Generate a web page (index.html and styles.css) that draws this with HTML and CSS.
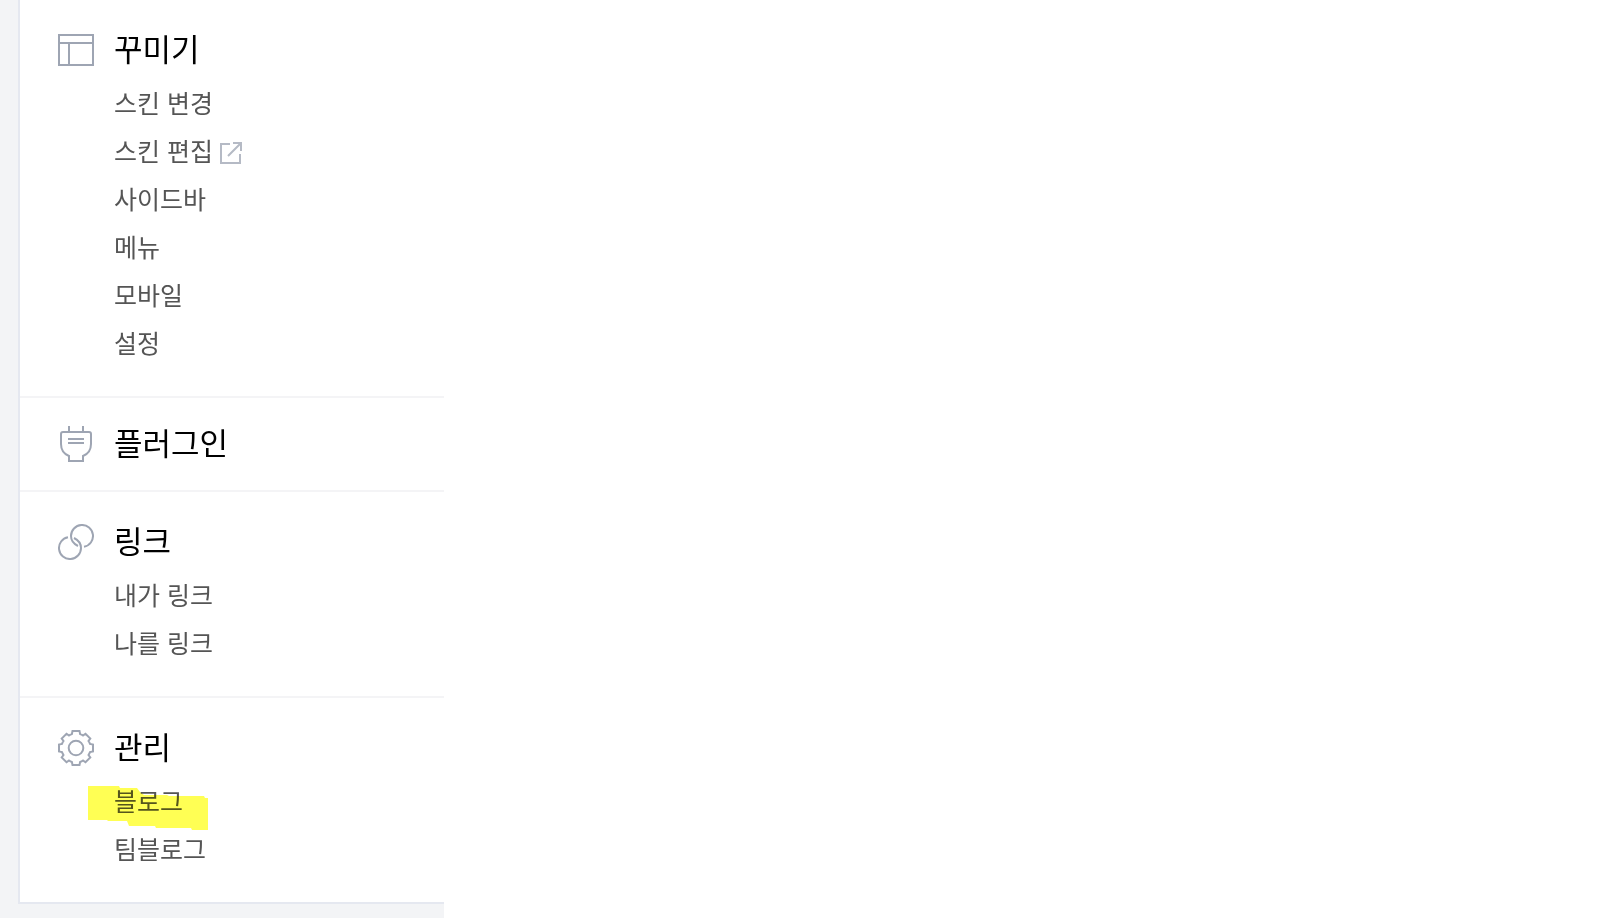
FILE: index.html
```html
<!DOCTYPE html>
<html lang="ko">

<head>
    <meta charset="UTF-8">
    <meta name="viewport" content="width=device-width, initial-scale=1.0">
    <title>블로그 관리</title>
    <link rel="stylesheet" href="styles.css">
</head>

<body>
    <aside class="sidebar">
        <nav class="menu">
            <section class="group">
                <h2 class="title">
                    <svg class="icon" viewBox="0 0 36 36">
                        <path d="M1 3h34v30H1zM1 11h34M11 11v22" />
                    </svg>
                    꾸미기
                </h2>
                <ul class="list">
                    <li><a href="#">스킨 변경</a></li>
                    <li>
                        <a href="#">스킨 편집
                            <svg class="external" viewBox="0 0 24 24">
                                <path d="M11 3H2v19h19v-9M9 15L21 3M14 2h8v8" />
                            </svg>
                        </a>
                    </li>
                    <li><a href="#">사이드바</a></li>
                    <li><a href="#">메뉴</a></li>
                    <li><a href="#">모바일</a></li>
                    <li><a href="#">설정</a></li>
                </ul>
            </section>

            <section class="group single">
                <h2 class="title">
                    <svg class="icon" viewBox="0 0 36 36">
                        <path d="M11 0v6M25 0v6M5 6h26q2 0 2 2v10c0 6-3 10-8 12v5H11v-5c-5-2-8-6-8-12V8q0-2 2-2zM10 13h16M10 17h16" />
                    </svg>
                    플러그인
                </h2>
            </section>

            <section class="group">
                <h2 class="title">
                    <svg class="icon" viewBox="0 0 36 36">
                        <path d="M26 22.800A11 11 0 1 0 13 12C13 16 16 20 20 22" />
                        <path d="M10 13.200A11 11 0 1 0 23 24C23 20 20 16 16 14" />
                    </svg>
                    링크
                </h2>
                <ul class="list">
                    <li><a href="#">내가 링크</a></li>
                    <li><a href="#">나를 링크</a></li>
                </ul>
            </section>

            <section class="group">
                <h2 class="title">
                    <svg class="icon" viewBox="-18 -18 36 36">
                        <path d="M-3.500-17H3.500L4.100-14Q5.600-13.500 7-12.500L9.500-14.300 14.300-9.500 12.500-7Q13.500-5.600 14-4.100L17-3.500V3.500L14 4.100Q13.500 5.600 12.500 7L14.300 9.500 9.500 14.300 7 12.500Q5.600 13.500 4.100 14L3.500 17H-3.500L-4.100 14Q-5.600 13.500-7 12.500L-9.500 14.300-14.300 9.500-12.500 7Q-13.500 5.600-14 4.100L-17 3.500V-3.500L-14-4.100Q-13.500-5.600-12.500-7L-14.300-9.500-9.500-14.300-7-12.500Q-5.600-13.500-4.100-14Z" />
                        <circle r="7.300" />
                    </svg>
                    관리
                </h2>
                <ul class="list">
                    <li>
                        <a class="marked" href="#">블로그
                            <svg class="marker" viewBox="0 0 120 44">
                                <path d="M0 0h31l1 2h17l3 4 4 3h23l2 1h35l1 2h3v32h-16l-1-2H68l-1-2H41l-2-5H20l-1-1H0z" />
                            </svg>
                        </a>
                    </li>
                    <li><a href="#">팀블로그</a></li>
                </ul>
            </section>
        </nav>
    </aside>
</body>

</html>
```

FILE: styles.css
```css
* {
    box-sizing: border-box;
}

body {
    margin: 0;
    background-color: #fff;
    font-family: "Noto Sans CJK KR", sans-serif;
}

.sidebar {
    width: 444px;
    min-height: 100vh;
    padding-left: 18px;
    background-color: #f3f4f6;
}

.menu {
    background-color: #fff;
    border-left: 2px solid #e5e8f0;
    border-bottom: 2px solid #e5e8f0;
}

.group {
    padding: 28px 38px 30px;
}

.group + .group {
    border-top: 2px solid #f4f4f6;
}

.single {
    padding: 24px 38px;
}

.title {
    display: flex;
    align-items: flex-start;
    gap: 20px;
    height: 44px;
    margin: 0;
    font-size: 31px;
    font-weight: 400;
    line-height: 40px;
    color: #000;
}

.icon {
    width: 36px;
    height: 36px;
    margin-top: 4px;
    fill: none;
    stroke: #9ea5b3;
    stroke-width: 2;
}

.list {
    margin: 0;
    padding: 6px 0 0 56px;
    list-style: none;
}

.list li {
    height: 48px;
}

.list a {
    display: inline-flex;
    align-items: center;
    gap: 6px;
    font-size: 25px;
    line-height: 48px;
    color: #555;
    text-decoration: none;
}

.list a:hover {
    text-decoration: underline;
}

.external {
    width: 24px;
    height: 24px;
    margin-top: 6px;
    fill: none;
    stroke: #b5bac5;
    stroke-width: 2;
}

.list .marked {
    position: relative;
}

/* highlighter pen over the current item */
.marker {
    position: absolute;
    left: -26px;
    top: 10px;
    width: 120px;
    height: 44px;
    fill: #ffff54;
    mix-blend-mode: multiply;
}
```
